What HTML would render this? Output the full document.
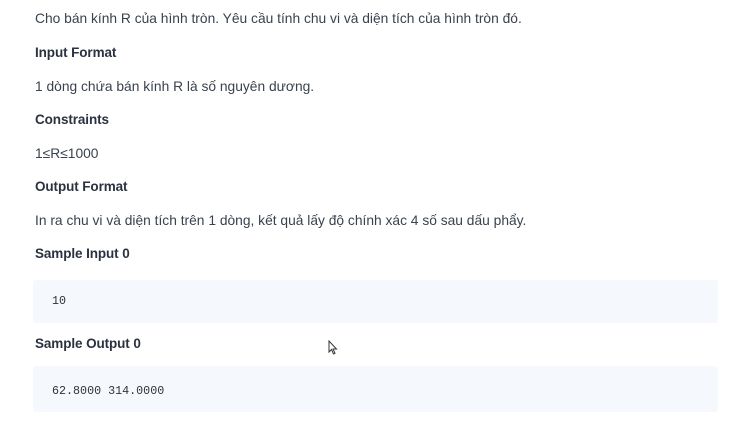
<!DOCTYPE html>
<html><head><meta charset="utf-8"><style>
body{margin:0;background:#fff;width:737px;height:427px;overflow:hidden;font-family:"Liberation Sans","DejaVu Sans",sans-serif;color:#39424e;font-size:13.8px}
.t{position:absolute;left:35px;white-space:nowrap;line-height:18px}
.h{font-weight:bold;color:#2a3240;font-size:13.5px;letter-spacing:-0.1px}
.code{position:absolute;left:33px;width:685px;background:#f5f8fc;border-radius:3px}
.m{position:absolute;left:52px;font-family:"Liberation Mono",monospace;font-size:11.7px;color:#333;line-height:14px}
</style></head><body>
<div class="t" style="top:10px">Cho bán kính R của hình tròn. Yêu cầu tính chu vi và diện tích của hình tròn đó.</div>
<div class="t h" style="top:44px">Input Format</div>
<div class="t" style="top:78px">1 dòng chứa bán kính R là số nguyên dương.</div>
<div class="t h" style="top:111px">Constraints</div>
<div class="t" style="top:145px">1≤R≤1000</div>
<div class="t h" style="top:178px">Output Format</div>
<div class="t" style="top:212px">In ra chu vi và diện tích trên 1 dòng, kết quả lấy độ chính xác 4 số sau dấu phẩy.</div>
<div class="t h" style="top:245px">Sample Input 0</div>
<div class="code" style="top:280px;height:43px"></div>
<div class="m" style="top:294px">10</div>
<div class="t h" style="top:335px">Sample Output 0</div>
<div class="code" style="top:366px;height:46px"></div>
<div class="m" style="top:384px">62.8000 314.0000</div>
<svg style="position:absolute;left:328px;top:340px" width="10" height="15" viewBox="0 0 10 15"><path d="M1 1 L1 12 L3.5 9.5 L5.5 14 L7 13.3 L5 9 L8.5 9 Z" fill="#fff" stroke="#333" stroke-width="1"/></svg>
</body></html>
